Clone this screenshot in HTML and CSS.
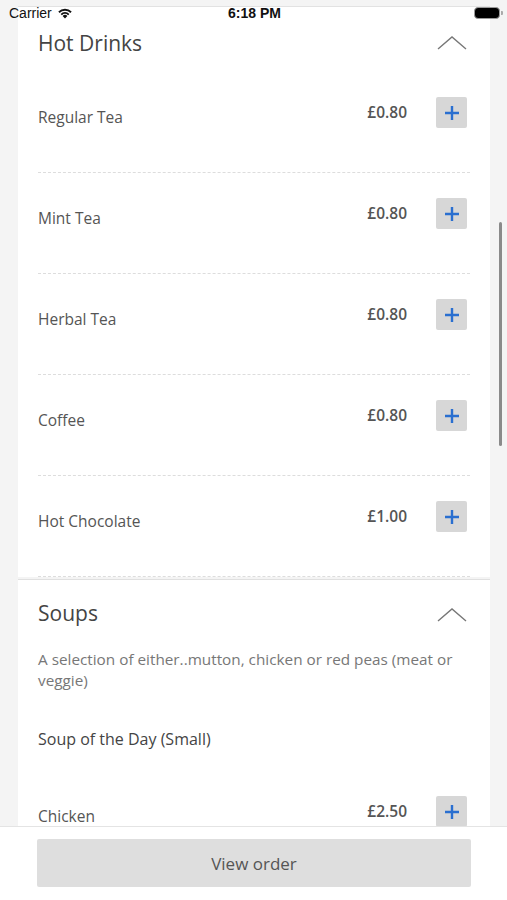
FILE: index.html
```html
<html>
    <head>
        <title>Menu</title>
        <link rel="stylesheet" href="styles.css">
    </head>
    <body>
        <div class="status">
            <span class="carrier">Carrier
                <svg class="wifi" width="16" height="12" viewBox="0 0 16 12">
                    <path d="M8 11.5 L5.6 8.9 A3.4 3.4 0 0 1 10.4 8.9 Z" fill="#111"/>
                    <path d="M3.6 6.9 A6.3 6.3 0 0 1 12.4 6.9 L11.1 8.2 A4.5 4.5 0 0 0 4.9 8.2 Z" fill="#111"/>
                    <path d="M1.3 4.6 A9.5 9.5 0 0 1 14.7 4.6 L13.4 5.9 A7.7 7.7 0 0 0 2.6 5.9 Z" fill="#111"/>
                </svg>
            </span>
            <span class="time">6:18 PM</span>
            <span class="battery"><span class="level"></span></span>
        </div>

        <div class="page">
            <div class="card">
                <div class="section-head">
                    <h2>Hot Drinks</h2>
                    <svg class="chevron" width="30" height="16" viewBox="0 0 30 16"><path d="M1 14 L15 2 L29 14" fill="none" stroke="#777" stroke-width="1.4"/></svg>
                </div>
                <div class="row">
                    <span class="name">Regular Tea</span>
                    <span class="price">£0.80</span>
                    <span class="add"><svg width="16" height="16" viewBox="0 0 16 16"><path d="M8 1 V15 M1 8 H15" stroke="#2a6fd0" stroke-width="2.4"/></svg></span>
                </div>
                <div class="row">
                    <span class="name">Mint Tea</span>
                    <span class="price">£0.80</span>
                    <span class="add"><svg width="16" height="16" viewBox="0 0 16 16"><path d="M8 1 V15 M1 8 H15" stroke="#2a6fd0" stroke-width="2.4"/></svg></span>
                </div>
                <div class="row">
                    <span class="name">Herbal Tea</span>
                    <span class="price">£0.80</span>
                    <span class="add"><svg width="16" height="16" viewBox="0 0 16 16"><path d="M8 1 V15 M1 8 H15" stroke="#2a6fd0" stroke-width="2.4"/></svg></span>
                </div>
                <div class="row">
                    <span class="name">Coffee</span>
                    <span class="price">£0.80</span>
                    <span class="add"><svg width="16" height="16" viewBox="0 0 16 16"><path d="M8 1 V15 M1 8 H15" stroke="#2a6fd0" stroke-width="2.4"/></svg></span>
                </div>
                <div class="row">
                    <span class="name">Hot Chocolate</span>
                    <span class="price">£1.00</span>
                    <span class="add"><svg width="16" height="16" viewBox="0 0 16 16"><path d="M8 1 V15 M1 8 H15" stroke="#2a6fd0" stroke-width="2.4"/></svg></span>
                </div>
            </div>

            <div class="card soups">
                <div class="section-head">
                    <h2>Soups</h2>
                    <svg class="chevron" width="30" height="16" viewBox="0 0 30 16"><path d="M1 14 L15 2 L29 14" fill="none" stroke="#777" stroke-width="1.4"/></svg>
                </div>
                <p class="desc">A selection of either..mutton, chicken or red peas (meat or veggie)</p>
                <div class="group">Soup of the Day (Small)</div>
                <div class="row">
                    <span class="name">Chicken</span>
                    <span class="price">£2.50</span>
                    <span class="add"><svg width="16" height="16" viewBox="0 0 16 16"><path d="M8 1 V15 M1 8 H15" stroke="#2a6fd0" stroke-width="2.4"/></svg></span>
                </div>
            </div>
        </div>

        <div class="scrollbar"></div>

        <div class="footer">
            <button class="view">View order</button>
        </div>
    </body>
</html>
```

FILE: styles.css
```css
* {
    box-sizing: border-box;
}
body {
    margin: 0;
    background: #f4f4f4;
    font-family: "Open Sans", "Noto Sans", sans-serif;
    color: #555;
    height: 900px;
    overflow: hidden;
}

/* status bar */
.status {
    position: absolute;
    top: 0;
    left: 0;
    width: 100%;
    height: 26px;
    padding: 0 7px 0 9px;
    display: flex;
    justify-content: space-between;
    align-items: center;
    font-family: "Liberation Sans", Arial, sans-serif;
    font-size: 14px;
    color: #111;
}
.carrier {
    display: flex;
    align-items: center;
    gap: 5px;
    width: 140px;
}
.time {
    font-weight: bold;
}
.battery {
    width: 140px;
    display: flex;
    justify-content: flex-end;
}
.battery .level {
    display: block;
    width: 26px;
    height: 12px;
    border: 1.5px solid #999;
    border-radius: 4px;
    background: #000;
    position: relative;
}
.battery .level::after {
    content: "";
    position: absolute;
    right: -4px;
    top: 3px;
    width: 2px;
    height: 4px;
    background: #aaa;
    border-radius: 0 1px 1px 0;
}

/* main list */
.page {
    margin: 0 17px 0 18px;
    padding-top: 6px;
}
.card {
    background: #fff;
    border-top: 1px solid #e2e2e2;
    padding: 0 20px;
}
.section-head {
    display: flex;
    justify-content: space-between;
    align-items: center;
    height: 65px;
    padding-top: 6px;
}
.section-head h2 {
    margin: 0;
    font-size: 21px;
    font-weight: normal;
    color: #444;
}
.chevron {
    margin-right: 3px;
}
.row {
    display: flex;
    align-items: flex-start;
    height: 101px;
    padding-top: 25px;
    border-bottom: 1px dashed #ddd;
}
.name {
    flex: 1;
    font-size: 15.5px;
    line-height: 31px;
    padding-top: 5px;
}
.price {
    font-size: 15.5px;
    font-weight: 600;
    line-height: 31px;
    margin-right: 29px;
    color: #555;
}
.add {
    width: 31px;
    height: 31px;
    margin-right: 3px;
    background: #d7d7d7;
    border-radius: 2px;
    display: flex;
    align-items: center;
    justify-content: center;
}
.soups {
    margin-top: 2px;
    border-top: 1px solid #e0e0e0;
}
.soups .section-head {
    height: 66px;
    padding-top: 0;
}
.soups .chevron {
    margin-top: 4px;
}
.desc {
    margin: 3px 0 0;
    font-size: 15.3px;
    line-height: 21px;
    color: #777;
}
.group {
    margin-top: 37px;
    font-size: 16px;
    font-weight: 500;
    color: #444;
}
.soups .row {
    padding-top: 46px;
}

.scrollbar {
    position: absolute;
    left: 499px;
    top: 222px;
    width: 3px;
    height: 224px;
    border-radius: 2px;
    background: #8a8a8a;
}

/* bottom bar */
.footer {
    position: fixed;
    left: 0;
    bottom: 0;
    width: 100%;
    height: 74px;
    background: #fff;
    border-top: 1px solid #e4e4e4;
    padding: 12px 36px 0 37px;
}
.view {
    width: 100%;
    height: 48px;
    border: none;
    border-radius: 2px;
    background: #dedede;
    color: #555;
    font-family: "Open Sans", "Noto Sans", sans-serif;
    font-size: 17px;
}
```
